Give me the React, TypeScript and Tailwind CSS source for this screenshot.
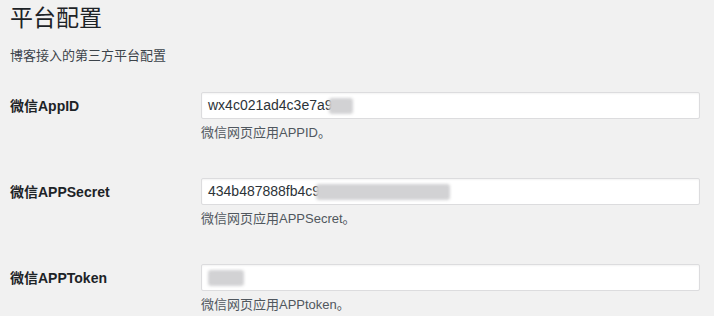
const font = { fontFamily: '"Liberation Sans", "Noto Sans CJK SC", sans-serif' }

type Row = {
  label: string
  value: string
  desc: string
  blur: string
}

const rows: Row[] = [
  { label: '微信AppID', value: 'wx4c021ad4c3e7a9', desc: '微信网页应用APPID。', blur: 'w-[24px] -ml-[4px]' },
  { label: '微信APPSecret', value: '434b487888fb4c9', desc: '微信网页应用APPSecret。', blur: 'w-[134px] -ml-[4px]' },
  { label: '微信APPToken', value: '', desc: '微信网页应用APPtoken。', blur: 'w-[36px]' },
]

export default function App() {
  return (
    <div className="min-h-[316px] w-full bg-[#f1f1f1] px-[10px] text-[#1d2327]" style={font}>
      <h1 className="pt-[4px] text-[23px] leading-[29px] font-normal text-[#1d2327]">平台配置</h1>
      <p className="mt-[13px] text-[13px] leading-[20px] text-[#3c434a]">博客接入的第三方平台配置</p>

      <div className="mt-[26px] flex flex-col gap-[35px]">
        {rows.map((row) => (
          <div key={row.label} className="flex">
            <div className="flex h-[27px] w-[191px] shrink-0 items-center pt-[2px] text-[14px] font-bold text-[#1d2327]">
              {row.label}
            </div>
            <div className="flex flex-col">
              <div className="flex h-[27px] w-[499px] items-center rounded-[2px] border border-[#dcdcde] bg-white pl-[6px] text-[14px] text-[#2c3338] shadow-[inset_0_1px_2px_rgba(0,0,0,0.05)]">
                <span>{row.value}</span>
                <span className={`h-[16px] ${row.blur} rounded-[3px] bg-[#d2d2d4] blur-[1.5px]`} />
              </div>
              <div className="mt-[4px] text-[13px] leading-[20px] text-[#50575e]">{row.desc}</div>
            </div>
          </div>
        ))}
      </div>
    </div>
  )
}
